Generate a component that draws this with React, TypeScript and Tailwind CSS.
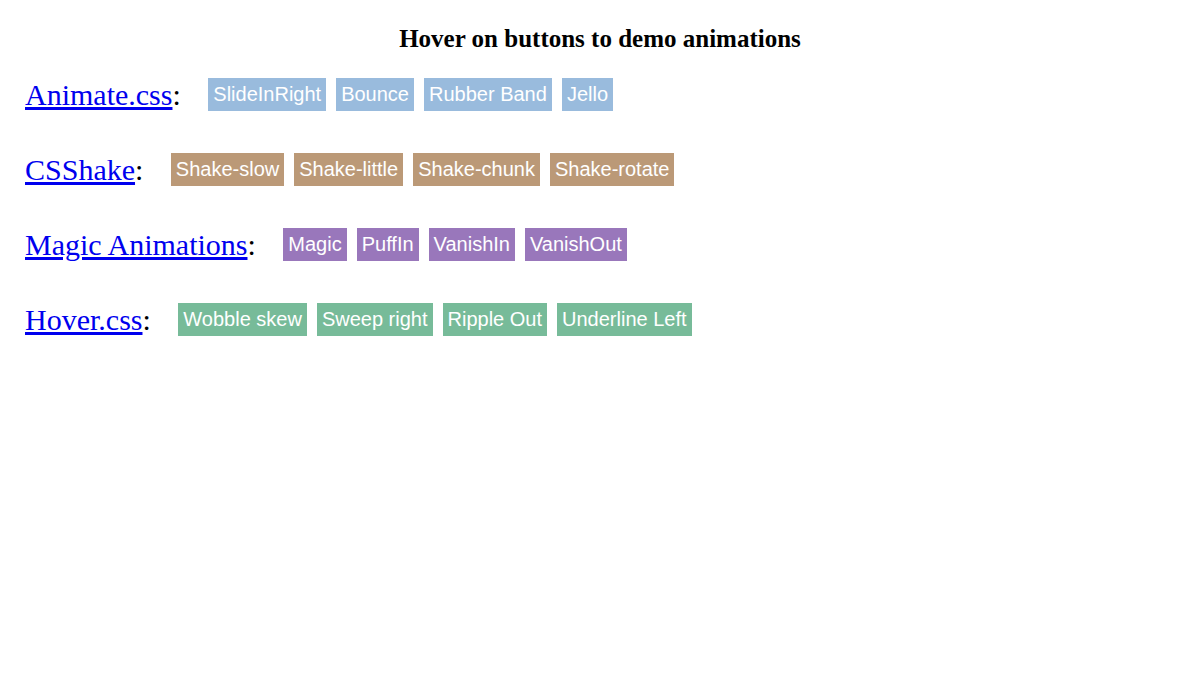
import React from "react";

const groups = [
  {
    name: "Animate.css",
    color: "bg-[#99bbdd]",
    buttons: ["SlideInRight", "Bounce", "Rubber Band", "Jello"],
  },
  {
    name: "CSShake",
    color: "bg-[#bb9977]",
    buttons: ["Shake-slow", "Shake-little", "Shake-chunk", "Shake-rotate"],
  },
  {
    name: "Magic Animations",
    color: "bg-[#9977bb]",
    buttons: ["Magic", "PuffIn", "VanishIn", "VanishOut"],
  },
  {
    name: "Hover.css",
    color: "bg-[#77bb99]",
    buttons: ["Wobble skew", "Sweep right", "Ripple Out", "Underline Left"],
  },
];

const App = () => {
  return (
    <div className="min-h-[682px] w-full bg-white font-['Liberation_Serif',serif] text-black">
      <div className="h-[57px] pt-[25px] text-center text-[25px] font-bold leading-[28px]">
        Hover on buttons to demo animations
      </div>

      <div className="flex flex-col pl-[25px]">
        {groups.map((group) => {
          return (
            <div key={group.name} className="flex h-[75px] flex-row items-center">
              <div className="mr-[27.5px] text-[30px] leading-[34px]">
                <a href="#" className="text-[#0000ee] underline">
                  {group.name}
                </a>
                :
              </div>
              <div className="flex flex-row gap-[10px]">
                {group.buttons.map((label) => (
                  <button
                    key={label}
                    className={`${group.color} px-[5px] py-[5px] font-['Liberation_Sans',sans-serif] text-[20px] leading-[23px] text-white`}
                  >
                    {label}
                  </button>
                ))}
              </div>
            </div>
          );
        })}
      </div>
    </div>
  );
};

export default App;
